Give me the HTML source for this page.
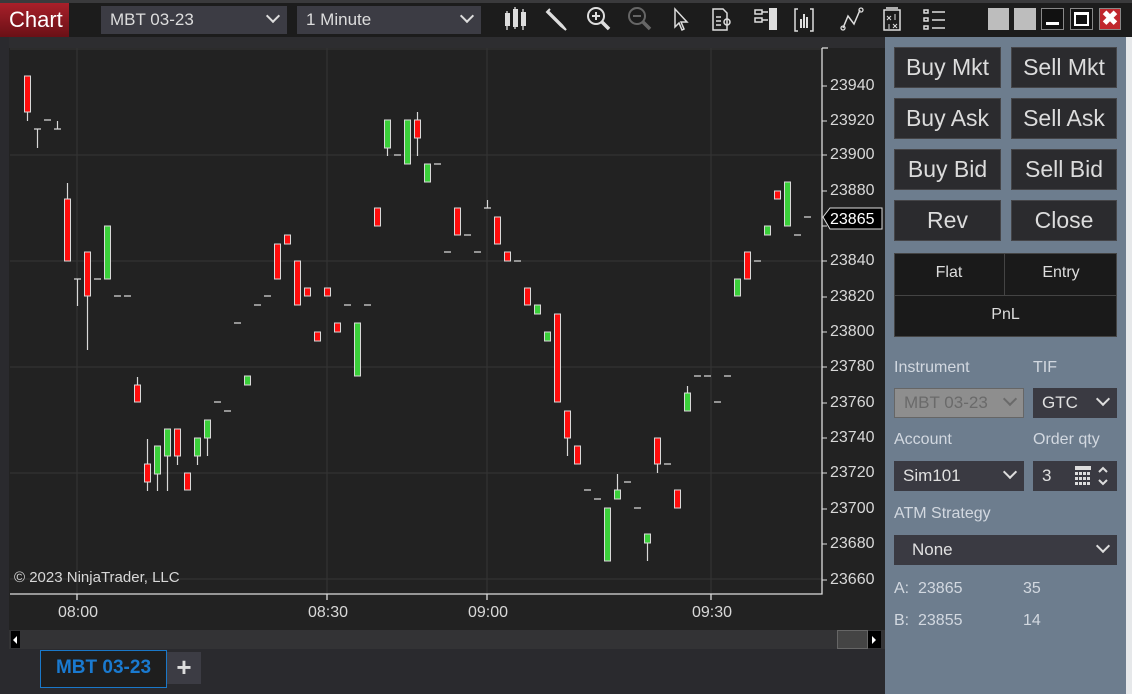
<!DOCTYPE html>
<html><head><meta charset="utf-8"><style>
*{margin:0;padding:0;box-sizing:border-box}
body{width:1132px;height:694px;overflow:hidden;background:#2a2a2e;font-family:"Liberation Sans",Arial,sans-serif;position:relative}
.a{position:absolute}
.dd{position:absolute;background:#3c3c44;color:#ddd;font-size:17px;line-height:28px;padding-left:9px}
.chev{position:absolute;right:9px;top:9px;width:10px;height:10px;border-right:2.5px solid #ddd;border-bottom:2.5px solid #ddd;transform:rotate(45deg);top:5px}
.btn{position:absolute;width:107px;height:41px;background:#2b2b2e;border:1px solid #454548;color:#dcdcdc;font-size:23px;text-align:center;line-height:39px}
.lbl{position:absolute;color:#d2d8e0;font-size:16px}
.pd{position:absolute;background:#3a3a42;color:#e0e0e0;font-size:17px;line-height:30px;padding-left:9px;height:30px}
.pl{position:absolute;left:830px;color:#d8d8d8;font-size:16px}
.tl{position:absolute;top:604px;color:#d8d8d8;font-size:16px}
</style></head><body>
<!-- toolbar -->
<div class="a" style="left:0;top:0;width:1132px;height:3px;background:#3a3a3c"></div>
<div class="a" style="left:0;top:3px;width:1132px;height:34px;background:#1c1c1c"></div>
<div class="a" style="left:0;top:3px;width:69px;height:34px;background:linear-gradient(#a8202a,#6a1016);color:#fff;font-size:22px;line-height:34px;padding-left:9px">Chart</div>
<div class="dd" style="left:101px;top:6px;width:186px;height:28px">MBT 03-23<div class="chev"></div></div>
<div class="dd" style="left:297px;top:6px;width:184px;height:28px">1 Minute<div class="chev"></div></div>
<svg class="a" style="left:495px;top:4px" width="480" height="32" viewBox="495 4 480 32" fill="none" stroke="#ddd" stroke-width="2">
<g fill="#ddd" stroke="none"><rect x="505" y="13" width="5" height="13"/><rect x="513" y="9" width="5" height="18"/><rect x="521" y="12" width="5" height="14"/></g>
<path d="M507 11v19M515 7v22M523 9v21" stroke-width="1.3"/>
<path d="M547 12l14 14l5 4l-4-5l-14-14z M547 12l3-3" />
<circle cx="596" cy="16" r="8"/><path d="M592 16h8M596 12v8M602 22l7 7" /><path d="M602 22l7 7" stroke-width="3.5"/>
<g stroke="#666"><circle cx="637" cy="16" r="8"/><path d="M633 16h8"/><path d="M643 22l7 7" stroke-width="3.5"/></g>
<path d="M675 9l0 18l4-4l3 7l2-1l-3-7l6 0z" stroke-width="1.5"/>
<path d="M713 9h10l4 4v17h-14z M716 17h5M716 21h5M716 25h5" stroke-width="1.5"/><circle cx="727" cy="22" r="3" stroke-width="1.5"/>
<path d="M755 10h7v4h-7zM755 18h7v4h-7zM762 12h6M762 20h6" stroke-width="1.5"/><rect x="769" y="8" width="8" height="22" fill="#ddd" stroke="none"/>
<path d="M798 9h-3v22h3M810 9h3v22h-3" stroke-width="1.5"/><g fill="#ddd" stroke="none"><rect x="800" y="19" width="2" height="9"/><rect x="803" y="14" width="2" height="14"/><rect x="806" y="17" width="2" height="11"/></g>
<path d="M843 28l5-12l6 8l6-14" stroke-width="1.5"/><circle cx="843" cy="28" r="2" stroke-width="1.3"/><circle cx="861" cy="10" r="2" stroke-width="1.3"/>
<path d="M884 10h16v20h-16z M886 8h12" stroke-width="1.5"/><path d="M887 16l4 4M891 16l-4 4M893 24l4 4M897 24l-4 4M895 14v6M889 24v5" stroke-width="1"/>
<path d="M924 10h4v3h-4zM924 18h4v3h-4zM924 26h4v3h-4zM932 12h13M932 20h13M932 28h13" stroke-width="1.5"/>
</svg>
<div class="a" style="left:988px;top:8px;width:21px;height:22px;background:#bdbdbd"></div>
<div class="a" style="left:1014px;top:8px;width:22px;height:22px;background:#bdbdbd"></div>
<div class="a" style="left:1041px;top:8px;width:23px;height:22px;background:#111;border:1px solid #888"><div class="a" style="left:4px;top:13px;width:13px;height:3px;background:#fff"></div></div>
<div class="a" style="left:1070px;top:8px;width:23px;height:22px;background:#111;border:1px solid #888"><div class="a" style="left:3px;top:3px;width:15px;height:14px;border:2px solid #fff;border-top-width:3px"></div></div>
<div class="a" style="left:1099px;top:8px;width:22px;height:22px;background:#c0272d;border:1px solid #888;color:#fff;font-size:20px;font-weight:bold;text-align:center;line-height:20px">✖</div>
<!-- chart -->
<div class="a" style="left:9px;top:37px;width:876px;height:11px;background:#2d2d30"></div>
<div class="a" style="left:9px;top:48px;width:876px;height:600px;background:#222"></div>
<svg class="a" style="left:0;top:0" width="885" height="640">
<g stroke="#333" stroke-width="1.3">
<path d="M77 48V594M327 48V594M487 48V594M711 48V594"/>
<path d="M10 49H822M10 155H822M10 261H822M10 367H822M10 473H822M10 579H822"/>
</g>
<path d="M822 48V594H10M822 48h6M77 594v6M327 594v6M487 594v6M711 594v6" stroke="#ddd" stroke-width="1.3" fill="none"/>
<g stroke="#ddd" stroke-width="1"><path d="M822 86h5M822 121h5M822 155h5M822 191h5M822 226h5M822 261h5M822 297h5M822 332h5M822 367h5M822 403h5M822 438h5M822 473h5M822 509h5M822 544h5M822 580h5"/></g>
<g stroke="#d8d8d8" stroke-width="1.2">
<path d="M27.5 112V121M37.5 129V148M57.5 121V129M67.5 183V199M77.5 279V306M87.5 296V350M137.5 377V385M147.5 439V491M157.5 474V491M167.5 456V491M177.5 456V465M197.5 456V465M207.5 438V456M387.5 148V156M417.5 112V156M487.5 200V208M567.5 438V456M617.5 474V490M647.5 543V561M657.5 464V473M687.5 386V393"/>
<path d="M34 129h7M44 120h7M54 129h7M74 279h7M94 279h7M114 296h7M124 296h7M214 402h7M224 411h7M234 323h7M254 305h7M264 296h7M344 305h7M364 305h7M394 155h7M434 164h7M444 252h7M464 235h7M474 252h7M484 208h7M514 261h7M584 490h7M594 499h7M624 482h7M634 508h7M664 464h7M694 376h7M704 376h7M714 402h7M724 376h7M754 261h7M794 235h7M804 217h7"/>
</g>
<g stroke="#d8d8d8" stroke-width="1" fill="#ff0d0d">
<rect x="24.5" y="76" width="6" height="36"/><rect x="64.5" y="199" width="6" height="62"/><rect x="84.5" y="252" width="6" height="44"/><rect x="134.5" y="385" width="6" height="17"/><rect x="144.5" y="464" width="6" height="18"/><rect x="174.5" y="429" width="6" height="27"/><rect x="184.5" y="473" width="6" height="17"/><rect x="274.5" y="244" width="6" height="35"/><rect x="284.5" y="235" width="6" height="9"/><rect x="294.5" y="261" width="6" height="44"/><rect x="304.5" y="288" width="6" height="8"/><rect x="314.5" y="332" width="6" height="9"/><rect x="324.5" y="288" width="6" height="8"/><rect x="334.5" y="323" width="6" height="9"/><rect x="374.5" y="208" width="6" height="18"/><rect x="414.5" y="120" width="6" height="18"/><rect x="454.5" y="208" width="6" height="27"/><rect x="494.5" y="217" width="6" height="27"/><rect x="504.5" y="252" width="6" height="9"/><rect x="524.5" y="288" width="6" height="17"/><rect x="554.5" y="314" width="6" height="88"/><rect x="564.5" y="411" width="6" height="27"/><rect x="574.5" y="446" width="6" height="18"/><rect x="654.5" y="438" width="6" height="26"/><rect x="674.5" y="490" width="6" height="18"/><rect x="744.5" y="252" width="6" height="27"/><rect x="774.5" y="191" width="6" height="8"/>
</g>
<g stroke="#d8d8d8" stroke-width="1" fill="#3ad03a">
<rect x="104.5" y="226" width="6" height="53"/><rect x="154.5" y="446" width="6" height="28"/><rect x="164.5" y="429" width="6" height="27"/><rect x="194.5" y="438" width="6" height="18"/><rect x="204.5" y="420" width="6" height="18"/><rect x="244.5" y="376" width="6" height="9"/><rect x="354.5" y="323" width="6" height="53"/><rect x="384.5" y="120" width="6" height="28"/><rect x="404.5" y="120" width="6" height="44"/><rect x="424.5" y="164" width="6" height="18"/><rect x="534.5" y="305" width="6" height="9"/><rect x="544.5" y="332" width="6" height="9"/><rect x="604.5" y="508" width="6" height="53"/><rect x="614.5" y="490" width="6" height="9"/><rect x="644.5" y="534" width="6" height="9"/><rect x="684.5" y="393" width="6" height="18"/><rect x="734.5" y="279" width="6" height="17"/><rect x="764.5" y="226" width="6" height="9"/><rect x="784.5" y="182" width="6" height="44"/>
</g>
<path d="M823 217l7-9h52v21h-52z" fill="#000" stroke="#ddd" stroke-width="1"/>
<text x="830" y="224" fill="#fff" font-size="16" font-family="Liberation Sans">23865</text>
</svg>
<div class="pl" style="top:77px">23940</div><div class="pl" style="top:112px">23920</div><div class="pl" style="top:146px">23900</div><div class="pl" style="top:182px">23880</div><div class="pl" style="top:252px">23840</div><div class="pl" style="top:288px">23820</div><div class="pl" style="top:323px">23800</div><div class="pl" style="top:358px">23780</div><div class="pl" style="top:394px">23760</div><div class="pl" style="top:429px">23740</div><div class="pl" style="top:464px">23720</div><div class="pl" style="top:500px">23700</div><div class="pl" style="top:535px">23680</div><div class="pl" style="top:571px">23660</div>
<div class="tl" style="left:58px">08:00</div><div class="tl" style="left:308px">08:30</div><div class="tl" style="left:468px">09:00</div><div class="tl" style="left:692px">09:30</div>
<div class="a" style="left:14px;top:569px;color:#d8d8d8;font-size:15px">© 2023 NinjaTrader, LLC</div>
<div class="a" style="left:9px;top:630px;width:876px;height:19px;background:#333335"></div>
<div class="a" style="left:11px;top:631px;width:9px;height:17px;background:#000"><div class="a" style="left:2px;top:5px;border:4px solid transparent;border-right:4px solid #fff;border-left:0"></div></div>
<div class="a" style="left:837px;top:630px;width:31px;height:19px;background:#444;border:1px solid #666"></div>
<div class="a" style="left:868px;top:631px;width:13px;height:17px;background:#000"><div class="a" style="left:4px;top:5px;border:4px solid transparent;border-left:4px solid #fff;border-right:0"></div></div>
<div class="a" style="left:40px;top:650px;width:127px;height:38px;background:#1e1e1e;border:1px solid #1a78c8;color:#1a7ad0;font-weight:bold;font-size:19px;text-align:center;line-height:34px">MBT 03-23</div>
<div class="a" style="left:167px;top:652px;width:34px;height:32px;background:#3c3c44;color:#ddd;font-size:26px;font-weight:bold;text-align:center;line-height:30px">+</div>
<!-- right panel -->
<div class="a" style="left:885px;top:37px;width:241px;height:657px;background:#6d7d8e"></div>
<div class="a" style="left:1126px;top:37px;width:6px;height:657px;background:#e6e8ea"></div>
<div class="btn" style="left:894px;top:47px">Buy Mkt</div><div class="btn" style="left:1011px;top:47px;width:106px">Sell Mkt</div>
<div class="btn" style="left:894px;top:98px">Buy Ask</div><div class="btn" style="left:1011px;top:98px;width:106px">Sell Ask</div>
<div class="btn" style="left:894px;top:149px">Buy Bid</div><div class="btn" style="left:1011px;top:149px;width:106px">Sell Bid</div>
<div class="btn" style="left:894px;top:200px">Rev</div><div class="btn" style="left:1011px;top:200px;width:106px">Close</div>
<div class="a" style="left:894px;top:253px;width:223px;height:84px;background:#1a1a1a;border:1px solid #444"></div>
<div class="a" style="left:895px;top:295px;width:221px;height:1px;background:#444"></div>
<div class="a" style="left:1004px;top:254px;width:1px;height:41px;background:#444"></div>
<div class="a" style="left:894px;top:264px;width:110px;text-align:center;color:#ddd;font-size:16px">Flat</div>
<div class="a" style="left:1005px;top:264px;width:112px;text-align:center;color:#ddd;font-size:16px">Entry</div>
<div class="a" style="left:894px;top:306px;width:223px;text-align:center;color:#ddd;font-size:16px">PnL</div>
<div class="lbl" style="left:894px;top:359px">Instrument</div><div class="lbl" style="left:1033px;top:359px">TIF</div>
<div class="pd" style="left:894px;top:388px;width:130px;background:#8e8e8e;border:1px solid #666;color:#6a6a6a;line-height:28px">MBT 03-23<div class="chev" style="border-color:#6a6a6a;right:8px"></div></div>
<div class="pd" style="left:1033px;top:388px;width:84px">GTC<div class="chev" style="top:6px"></div></div>
<div class="lbl" style="left:894px;top:431px">Account</div><div class="lbl" style="left:1033px;top:431px">Order qty</div>
<div class="pd" style="left:894px;top:461px;width:130px">Sim101<div class="chev" style="top:6px"></div></div>
<div class="pd" style="left:1033px;top:461px;width:84px">3
<svg class="a" style="left:42px;top:5px" width="38" height="20"><g fill="#ddd"><rect x="0" y="0" width="16" height="4"/><rect x="0" y="6" width="3" height="3"/><rect x="4" y="6" width="3" height="3"/><rect x="8" y="6" width="3" height="3"/><rect x="12" y="6" width="3" height="3"/><rect x="0" y="11" width="3" height="3"/><rect x="4" y="11" width="3" height="3"/><rect x="8" y="11" width="3" height="3"/><rect x="12" y="11" width="3" height="3"/><rect x="0" y="16" width="3" height="3"/><rect x="4" y="16" width="3" height="3"/><rect x="8" y="16" width="3" height="3"/><rect x="12" y="16" width="3" height="3"/></g><path d="M24 6l4-4l4 4M24 14l4 4l4-4" stroke="#ddd" stroke-width="2" fill="none"/></svg></div>
<div class="lbl" style="left:894px;top:505px">ATM Strategy</div>
<div class="pd" style="left:894px;top:535px;width:223px;padding-left:18px">None<div class="chev" style="top:6px"></div></div>
<div class="lbl" style="left:894px;top:580px">A:&nbsp; 23865</div><div class="lbl" style="left:1023px;top:580px">35</div>
<div class="lbl" style="left:894px;top:612px">B:&nbsp; 23855</div><div class="lbl" style="left:1023px;top:612px">14</div>
</body></html>
